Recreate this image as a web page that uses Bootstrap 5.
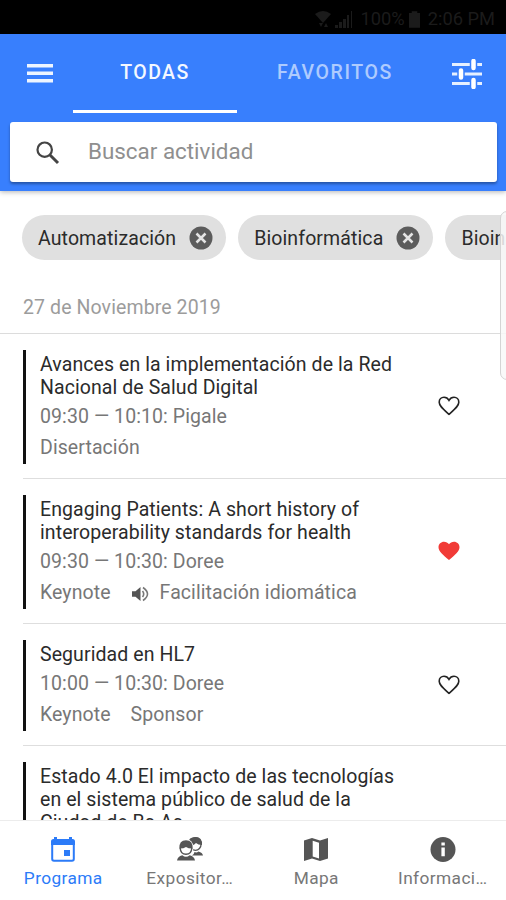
<!DOCTYPE html>
<html lang="es">
<head>
<meta charset="utf-8">
<meta name="viewport" content="width=device-width, initial-scale=1">
<title>Programa</title>
<link href="https://cdn.jsdelivr.net/npm/bootstrap@5.3.0/dist/css/bootstrap.min.css" rel="stylesheet">
<style>
  body { font-family: Roboto, "Noto Sans", sans-serif; height: 900px; color: #222; background: #fff; }
  svg { display: block; flex: none; }
  .status-bar { height: 34px; background: #000; color: #1b1b1b; font-size: 18.3px; padding: 4px 11px 0 0; }
  .app-head { height: 157px; background: #387ffd; box-shadow: 0 1px 5px rgba(0,0,0,.3); z-index: 2; padding: 0 9px 0 10px; }
  .tab-row { height: 79px; padding-left: 20px; }
  .tab-link { height: 79px; border-bottom: 3px solid transparent; font-size: 19.5px; font-weight: 500; letter-spacing: 1.4px; color: rgba(255,255,255,.6); text-decoration: none; line-height: 77px; }
  .tab-todas { width: 164px; }
  .tab-fav { width: 196px; letter-spacing: 1.6px; }
  .tab-link.active { color: #f4f8ff; border-color: #fff; }
  .menu-btn { margin-left: 17px; }
  .tab-row .tune { margin-left: 19px; }
  .search-box { height: 60px; margin-top: 9px; border-radius: 3px; box-shadow: 0 2px 3px rgba(0,0,0,.35); font-size: 22.4px; color: #8f8f8f; padding: 0 0 0 25px; gap: 28px; }
  .chips { padding: 24px 0 0 22px; gap: 12px; height: 69px; }
  .chip { height: 45px; background: #e0e0e0; padding: 2px 13px 0 16px; font-size: 19.5px; letter-spacing: .11px; color: #2b2b2b; flex: none; }
  .chip svg { margin: -1px 0 0 13px; }
  .date-head { height: 74px; border-bottom: 1px solid #dcdcdc; padding: 33px 0 0 23px; font-size: 19.5px; letter-spacing: .1px; color: #9c9c9c; }
  .talk { margin-left: 23px; padding: 16px 46px 14px 0; border-bottom: 1px solid #dedede; }
  .talk > svg { margin-top: -2px; }
  .talk-body { border-left: 3px solid #111; padding: 3px 0 1px 14px; width: 385px; }
  .talk-title { font-size: 19.5px; line-height: 23px; letter-spacing: .08px; margin: 0 0 2px; font-weight: 400; color: #2b2b2b; }
  .talk-line { font-size: 19.5px; line-height: 31px; letter-spacing: .08px; color: #777; height: 31px; }
  .talk-line .vol { margin: 2px 11px 0 21px; }
  .talk-line.tags { gap: 20px; }
  .side-panel { left: 500px; top: 211px; width: 20px; height: 169px; border: 1px solid #d4d4d4; border-radius: 7px; background: rgba(248,248,248,.85); z-index: 3; }
  .bottom-nav { height: 80px; border-top: 1px solid #ececec; background: #fff; z-index: 2; }
  .nav-item-b { color: #777; font-size: 17.3px; letter-spacing: .4px; line-height: 24px; padding-top: 15px; text-decoration: none; width: 126.5px; }
  .nav-item-b svg { color: #555; margin-bottom: 2px; }
  .nav-item-b.active, .nav-item-b.active svg { color: #2c7bf8; }
</style>
</head>
<body class="d-flex flex-column overflow-hidden position-relative">
<div class="status-bar d-flex justify-content-end align-items-center flex-shrink-0">
  <svg width="16" height="17" viewBox="0 0 16 17" fill="currentColor"><path d="M0 3Q8-3 16 3L8 12z"/><path d="M4 12l2 4 2-4M9 16l2-4 2 4"/></svg>
  <svg class="ms-1" width="18" height="17" viewBox="0 0 18 17" fill="currentColor"><path d="M0 17v-3h3v3zM4 17v-6h3v6zM8 17V8h3v9zM12 17V4h2v13zM16 17V0h1v17z"/></svg>
  <span class="ms-2">100%</span>
  <svg class="mx-1" width="11" height="17" viewBox="0 0 12 18" fill="currentColor"><path d="M0 2h3V0h6v2h3v16H0z"/></svg>
  <span class="ms-1">2:06 PM</span>
</div>

<header class="app-head flex-shrink-0 position-relative">
  <div class="d-flex">
    <div class="menu-btn d-flex align-items-center">
      <svg width="26" height="19" viewBox="0 0 26 19" fill="#eef5ff"><path d="M0 0h26v3.600H0zM0 7.500h26v3.600H0zM0 15h26v3.600H0z"/></svg>
    </div>
    <nav class="tab-row d-flex flex-grow-1">
      <a class="tab-link tab-todas text-center active" href="#">TODAS</a>
      <a class="tab-link tab-fav text-center" href="#">FAVORITOS</a>
      <div class="tune d-flex align-items-center">
        <svg width="30" height="30" viewBox="0 0 30 30"><path d="M0 5.500h30M0 15h30M0 24.500h30" stroke="#e6f0ff" stroke-width="3"/><path d="M21.500 2v7M9 11.500v7M21.500 21v7" stroke="#387ffd" stroke-width="7.500"/><path d="M21.500 2v7M9 11.500v7M21.500 21v7" stroke="#fff" stroke-width="4.500" stroke-linecap="round"/></svg>
      </div>
    </nav>
  </div>
  <div class="search-box bg-white d-flex align-items-center">
    <svg width="25" height="25" viewBox="0 0 25 25" fill="none" stroke="#444"><circle cx="9.700" cy="9.700" r="7.200" stroke-width="2.200"/><path d="M15 15l8 8" stroke-width="3"/></svg>
    <span>Buscar actividad</span>
  </div>
</header>

<div class="chips d-flex flex-shrink-0 overflow-hidden">
  <span class="chip rounded-pill d-flex align-items-center"><span>Automatización</span>
    <svg width="24" height="24" viewBox="0 0 24 24"><circle cx="12" cy="12" r="11.500" fill="#5c5c5c"/><path d="M7.500 7.500l9 9M16.500 7.500l-9 9" stroke="#e4e4e4" stroke-width="2.500"/></svg></span>
  <span class="chip rounded-pill d-flex align-items-center"><span>Bioinformática</span>
    <svg width="24" height="24" viewBox="0 0 24 24"><circle cx="12" cy="12" r="11.500" fill="#5c5c5c"/><path d="M7.500 7.500l9 9M16.500 7.500l-9 9" stroke="#e4e4e4" stroke-width="2.500"/></svg></span>
  <span class="chip rounded-pill d-flex align-items-center"><span>Bioingeniería</span></span>
</div>
<div class="date-head flex-shrink-0">27 de Noviembre 2019</div>

<main class="flex-grow-1 overflow-hidden">
  <article class="talk d-flex align-items-center justify-content-between">
    <div class="talk-body">
      <h2 class="talk-title">Avances en la implementación de la Red<br>Nacional de Salud Digital</h2>
      <div class="talk-line">09:30 — 10:10: Pigale</div>
      <div class="talk-line">Disertación</div>
    </div>
    <svg width="22" height="20" viewBox="0 0 22 20"><path d="M11 18.300C5 13 1.200 10 1.200 6.200 1.200 3.300 3.400 1.300 6 1.300c2 0 3.900 1.100 5 3 1.100-1.900 3-3 5-3 2.600 0 4.800 2 4.800 4.900C20.800 10 17 13 11 18.300z" fill="none" stroke="#222" stroke-width="1.600"/></svg>
  </article>
  <article class="talk d-flex align-items-center justify-content-between">
    <div class="talk-body">
      <h2 class="talk-title">Engaging Patients: A short history of<br>interoperability standards for health</h2>
      <div class="talk-line">09:30 — 10:30: Doree</div>
      <div class="talk-line d-flex align-items-center"><span>Keynote</span>
        <svg class="vol" width="17" height="16" viewBox="0 0 17 16"><path d="M0 5.200h3.500L8.500 1v14L3.500 10.800H0z" fill="#555"/><path d="M10.500 5q2.400 3 0 6M11 1.500q9 6.500 0 13" fill="none" stroke="#777" stroke-width="1.600"/></svg>
        <span>Facilitación idiomática</span></div>
    </div>
    <svg width="22" height="20" viewBox="0 0 22 20"><path d="M11 19C5 13.700.500 10.600.500 6.200.500 3 3 .700 6 .700c2 0 3.900 1 5 2.500 1.100-1.500 3-2.500 5-2.500 3 0 5.500 2.300 5.500 5.500C21.500 10.600 17 13.700 11 19z" fill="#f13b37"/></svg>
  </article>
  <article class="talk d-flex align-items-center justify-content-between">
    <div class="talk-body">
      <h2 class="talk-title">Seguridad en HL7</h2>
      <div class="talk-line">10:00 — 10:30: Doree</div>
      <div class="talk-line d-flex tags"><span>Keynote</span><span>Sponsor</span></div>
    </div>
    <svg width="22" height="20" viewBox="0 0 22 20"><path d="M11 18.300C5 13 1.200 10 1.200 6.200 1.200 3.300 3.400 1.300 6 1.300c2 0 3.900 1.100 5 3 1.100-1.900 3-3 5-3 2.600 0 4.800 2 4.800 4.900C20.800 10 17 13 11 18.300z" fill="none" stroke="#222" stroke-width="1.600"/></svg>
  </article>
  <article class="talk d-flex align-items-center justify-content-between">
    <div class="talk-body">
      <h2 class="talk-title">Estado 4.0 El impacto de las tecnologías<br>en el sistema público de salud de la<br>Ciudad de Bs As</h2>
      <div class="talk-line">10:00 — 10:30: Pigale</div>
      <div class="talk-line">Disertación</div>
    </div>
    <svg width="22" height="20" viewBox="0 0 22 20"><path d="M11 18.300C5 13 1.200 10 1.200 6.200 1.200 3.300 3.400 1.300 6 1.300c2 0 3.900 1.100 5 3 1.100-1.900 3-3 5-3 2.600 0 4.800 2 4.800 4.900C20.800 10 17 13 11 18.300z" fill="none" stroke="#222" stroke-width="1.600"/></svg>
  </article>
</main>

<div class="side-panel position-absolute"></div>

<nav class="bottom-nav d-flex flex-shrink-0 position-relative">
  <a class="nav-item-b active d-flex flex-column align-items-center" href="#">
    <svg width="26" height="28" viewBox="0 0 26 28"><path d="M1 9h24V5.500Q25 3 22.500 3H22V1h-3v2H7V1H4v2h-.500Q1 3 1 5.500z" fill="currentColor"/><path d="M2.200 6v17q0 1.800 1.800 1.800h18q1.800 0 1.800-1.800V6" fill="none" stroke="currentColor" stroke-width="2"/><path d="M14 14h6v6h-6z" fill="currentColor"/></svg>
    <span>Programa</span></a>
  <a class="nav-item-b d-flex flex-column align-items-center" href="#">
    <svg width="26" height="28" viewBox="0 0 26 28"><ellipse cx="18.500" cy="8" rx="5.600" ry="6.300" fill="#fff" stroke="currentColor" stroke-width="1.300"/><path d="M11 7q.500-6 7.500-6T25 9q-4 0-6-2-2 3-8 2zM15 19.500q2-1 2.500-3.500 2 1 4-.500 4 1 4.500 4z" fill="currentColor"/><ellipse cx="9" cy="11.500" rx="7.600" ry="8.500" fill="#fff"/><path d="M2.300 12.500Q2 4.200 9 4.200t6.700 8.300Q11 12.500 9 11 7 12.500 2.300 12.500zM0 24.500q.500-4 5.300-5.300 3.700 3 7.400 0 4.800 1.300 5.300 5.300z" fill="currentColor"/><path d="M3.200 12q.300 6.300 5.800 6.300t5.800-6.300" fill="none" stroke="currentColor" stroke-width="1.400"/></svg>
    <span>Expositor…</span></a>
  <a class="nav-item-b d-flex flex-column align-items-center" href="#">
    <svg width="26" height="28" viewBox="0 0 26 28"><path d="M1 4.500l8-2.500 8 2.500L25 2v20.500l-8 2.500-8-2.500L1 25z" fill="currentColor"/><path d="M9.700 4.800l6.300 2v15.600l-6.300-2z" fill="#fff"/></svg>
    <span>Mapa</span></a>
  <a class="nav-item-b d-flex flex-column align-items-center" href="#">
    <svg width="26" height="28" viewBox="0 0 26 28"><circle cx="13" cy="13.500" r="12.500" fill="currentColor"/><path d="M11.400 6.500h3.400v3h-3.400zM11.400 11.500h3.400v8.700h-3.400z" fill="#fff"/></svg>
    <span>Informaci…</span></a>
</nav>
</body>
</html>
